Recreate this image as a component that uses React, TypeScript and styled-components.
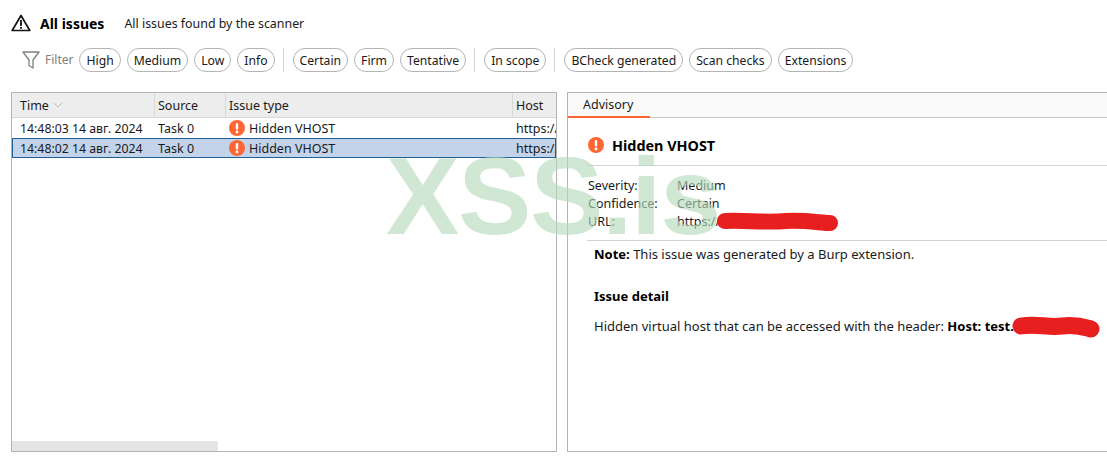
import styled, { createGlobalStyle } from "styled-components";

const columns = "143px 71px 287px 1fr";

const rows = [
  { time: "14:48:03 14 авг. 2024", selected: false },
  { time: "14:48:02 14 авг. 2024", selected: true },
];

const filterGroups = [
  ["High", "Medium", "Low", "Info"],
  ["Certain", "Firm", "Tentative"],
  ["In scope"],
  ["BCheck generated", "Scan checks", "Extensions"],
];

const AlertIcon = ({ size }: { size: number }) => (
  <IconSvg width={size} height={size} viewBox="0 0 16 16">
    <circle cx="8" cy="8" r="8" fill="#ff6633" />
    <rect x="6.8" y="3" width="2.4" height="6.6" rx="1" fill="#fff" />
    <circle cx="8" cy="12" r="1.4" fill="#fff" />
  </IconSvg>
);

const App = () => {
  return (
    <>
      <GlobalStyle />
      <Page>
        <Header>
          <svg width="20" height="18" viewBox="0 0 20 18">
            <path
              d="M10 1.5 L18.8 16.5 H1.2 Z"
              fill="none"
              stroke="#111"
              strokeWidth="1.7"
              strokeLinejoin="round"
            />
            <rect x="9.1" y="6" width="1.8" height="6" fill="#111" />
            <rect x="9.1" y="13" width="1.8" height="1.8" fill="#111" />
          </svg>
          <Title>All issues</Title>
          <Subtitle>All issues found by the scanner</Subtitle>
        </Header>

        <FilterBar>
          <svg width="18" height="20" viewBox="0 0 18 20">
            <path
              d="M1 2 H17 L11 10 V18 L7 15.5 V10 Z"
              fill="none"
              stroke="#808080"
              strokeWidth="1.3"
              strokeLinejoin="round"
            />
          </svg>
          <FilterLabel>Filter</FilterLabel>
          {filterGroups.map((group, i) => (
            <FilterGroup key={i}>
              {i > 0 && <Divider />}
              {group.map((name) => (
                <Pill key={name}>{name}</Pill>
              ))}
            </FilterGroup>
          ))}
        </FilterBar>

        <Panels>
          <TablePanel>
            <TableHead>
              <HeadCell>
                Time
                <svg width="10" height="6" viewBox="0 0 10 6">
                  <path d="M1 1 L5 5 L9 1" fill="none" stroke="#bbb" strokeWidth="1" />
                </svg>
              </HeadCell>
              <HeadCell>Source</HeadCell>
              <HeadCell>Issue type</HeadCell>
              <HeadCell>Host</HeadCell>
            </TableHead>
            {rows.map((row) => (
              <Row key={row.time} $selected={row.selected}>
                <TimeCell>{row.time}</TimeCell>
                <Cell>Task 0</Cell>
                <IssueCell>
                  <AlertIcon size={16} />
                  Hidden VHOST
                </IssueCell>
                <Cell>https://</Cell>
              </Row>
            ))}
            <ScrollThumb />
          </TablePanel>

          <DetailPanel>
            <Tabs>
              <Tab>Advisory</Tab>
            </Tabs>
            <Advisory>
              <AdvisoryTitle>
                <AlertIcon size={16} />
                <h2>Hidden VHOST</h2>
              </AdvisoryTitle>
              <Meta>
                <span>Severity:</span>
                <span>Medium</span>
                <span>Confidence:</span>
                <span>Certain</span>
                <span>URL:</span>
                <span>https://</span>
              </Meta>
              <Body>
                <Note>
                  <b>Note:</b> This issue was generated by a Burp extension.
                </Note>
                <SectionTitle>Issue detail</SectionTitle>
                <p>
                  Hidden virtual host that can be accessed with the header: <b>Host: test.</b>
                </p>
              </Body>
            </Advisory>
          </DetailPanel>
        </Panels>

        <Watermark>XSS.is</Watermark>
        <UrlScribble width="126" height="24" viewBox="0 0 126 24">
          <path
            d="M9 11 C30 10 48 13 70 11 C90 10 105 13 114 13"
            fill="none"
            stroke="#e81f1f"
            strokeWidth="16"
            strokeLinecap="round"
          />
        </UrlScribble>
        <HostScribble width="92" height="24" viewBox="0 0 92 24">
          <path
            d="M9 11 C25 8 35 13 50 11 C65 9 75 13 79 14"
            fill="none"
            stroke="#e81f1f"
            strokeWidth="17"
            strokeLinecap="round"
          />
        </HostScribble>
      </Page>
    </>
  );
};

const GlobalStyle = createGlobalStyle`
  html, body {
    margin: 0;
    background: #fff;
    overflow: hidden;
  }

  body {
    font-family: "Noto Sans", "Open Sans", sans-serif;
    font-size: 13px;
    color: #1a1a1a;
  }
`;

const Page = styled.div`
  position: relative;
  width: 1107px;
  height: 470px;
  overflow: hidden;
  display: flex;
  flex-direction: column;
`;

const IconSvg = styled.svg`
  flex: none;
`;

const Header = styled.div`
  display: flex;
  align-items: center;
  height: 20px;
  padding: 13px 0 0 11px;
`;

const Title = styled.h1`
  margin: 0 0 0 9px;
  font-size: 14px;
  font-weight: 700;
  color: #000;
`;

const Subtitle = styled.span`
  margin-left: 20px;
  font-size: 12.4px;
`;

const FilterBar = styled.div`
  display: flex;
  align-items: center;
  height: 26px;
  margin-top: 14px;
  padding-left: 22px;
`;

const FilterLabel = styled.span`
  margin: 0 6px 2px 5px;
  font-size: 12px;
  color: #808080;
`;

const FilterGroup = styled.div`
  display: flex;
  align-items: center;
  gap: 6px;
  margin-right: 8px;
`;

const Divider = styled.div`
  width: 1px;
  height: 24px;
  margin-right: 3px;
  background: #d4d4d4;
`;

const Pill = styled.span`
  height: 22px;
  padding: 0 6px;
  display: flex;
  align-items: center;
  border: 1px solid #b4b4b4;
  border-radius: 12px;
  font-size: 12.2px;
  white-space: nowrap;
`;

const Panels = styled.div`
  display: flex;
  gap: 10px;
  height: 360px;
  margin-top: 19px;
  padding-left: 11px;
`;

const TablePanel = styled.div`
  position: relative;
  flex: none;
  box-sizing: border-box;
  width: 546px;
  border: 1px solid #b4b4b4;
  overflow: hidden;
`;

const TableHead = styled.div`
  display: grid;
  grid-template-columns: ${columns};
  height: 24px;
  background: #ededed;
  border-bottom: 1px solid #d8d8d8;
`;

const HeadCell = styled.div`
  display: flex;
  align-items: center;
  gap: 4px;
  padding-left: 3px;
  border-right: 1px solid #d8d8d8;
  font-size: 12.5px;

  &:first-child {
    padding-left: 8px;
  }

  &:last-child {
    border-right: 0;
  }
`;

const Row = styled.div<{ $selected: boolean }>`
  display: grid;
  grid-template-columns: ${columns};
  box-sizing: border-box;
  height: 20px;
  background: ${(p) => (p.$selected ? "#c3d4ea" : "#fff")};
  outline: ${(p) => (p.$selected ? "1px solid #1f5f96" : "none")};
  outline-offset: -1px;
`;

const Cell = styled.div`
  display: flex;
  align-items: center;
  padding-left: 3px;
  font-size: 12.5px;
  white-space: nowrap;
  overflow: hidden;
`;

const TimeCell = styled(Cell)`
  padding-left: 8px;
  font-size: 12.3px;
`;

const IssueCell = styled(Cell)`
  gap: 4px;
`;

const ScrollThumb = styled.div`
  position: absolute;
  left: 0;
  bottom: 0;
  width: 206px;
  height: 10px;
  background: #e5e5e5;
`;

const DetailPanel = styled.div`
  flex: none;
  box-sizing: border-box;
  width: 560px;
  border: 1px solid #b4b4b4;
  overflow: hidden;
`;

const Tabs = styled.div`
  height: 24px;
  background: #fafafa;
  border-bottom: 1px solid #c8c8c8;
`;

const Tab = styled.div`
  box-sizing: border-box;
  width: 82px;
  height: 25px;
  padding: 3px 0 0 15px;
  border-bottom: 2px solid #ff6633;
  font-size: 12.5px;
`;

const Advisory = styled.div`
  padding-top: 17px;
`;

const AdvisoryTitle = styled.div`
  display: flex;
  align-items: center;
  gap: 8px;
  height: 20px;
  margin-left: 19px;
  padding: 0 0 10px 1px;
  border-bottom: 1px solid #d4d4d4;

  h2 {
    margin: 0;
    font-size: 14.4px;
    font-weight: 700;
    color: #000;
  }
`;

const Meta = styled.div`
  display: grid;
  grid-template-columns: 89px 1fr;
  grid-auto-rows: 18px;
  align-items: center;
  margin-left: 19px;
  padding: 10px 0 10px 1px;
  border-bottom: 1px solid #d4d4d4;
  font-size: 12.5px;
`;

const Body = styled.div`
  padding: 4px 0 0 26px;
  font-size: 13px;

  p {
    margin: 0;
  }

  b {
    color: #000;
  }
`;

const Note = styled.p`
  height: 42px;
`;

const SectionTitle = styled.h3`
  margin: 0 0 12px;
  font-size: 13px;
  font-weight: 700;
  color: #000;
`;

const Watermark = styled.div`
  position: absolute;
  left: 386px;
  top: 135px;
  font-family: "Liberation Sans", sans-serif;
  font-size: 110px;
  font-weight: 700;
  line-height: 1.1;
  letter-spacing: -1.4px;
  color: rgb(181, 219, 186);
  opacity: 0.63;
  pointer-events: none;
`;

const UrlScribble = styled.svg`
  position: absolute;
  left: 716px;
  top: 210px;
`;

const HostScribble = styled.svg`
  position: absolute;
  left: 1012px;
  top: 315px;
`;

export default App;
